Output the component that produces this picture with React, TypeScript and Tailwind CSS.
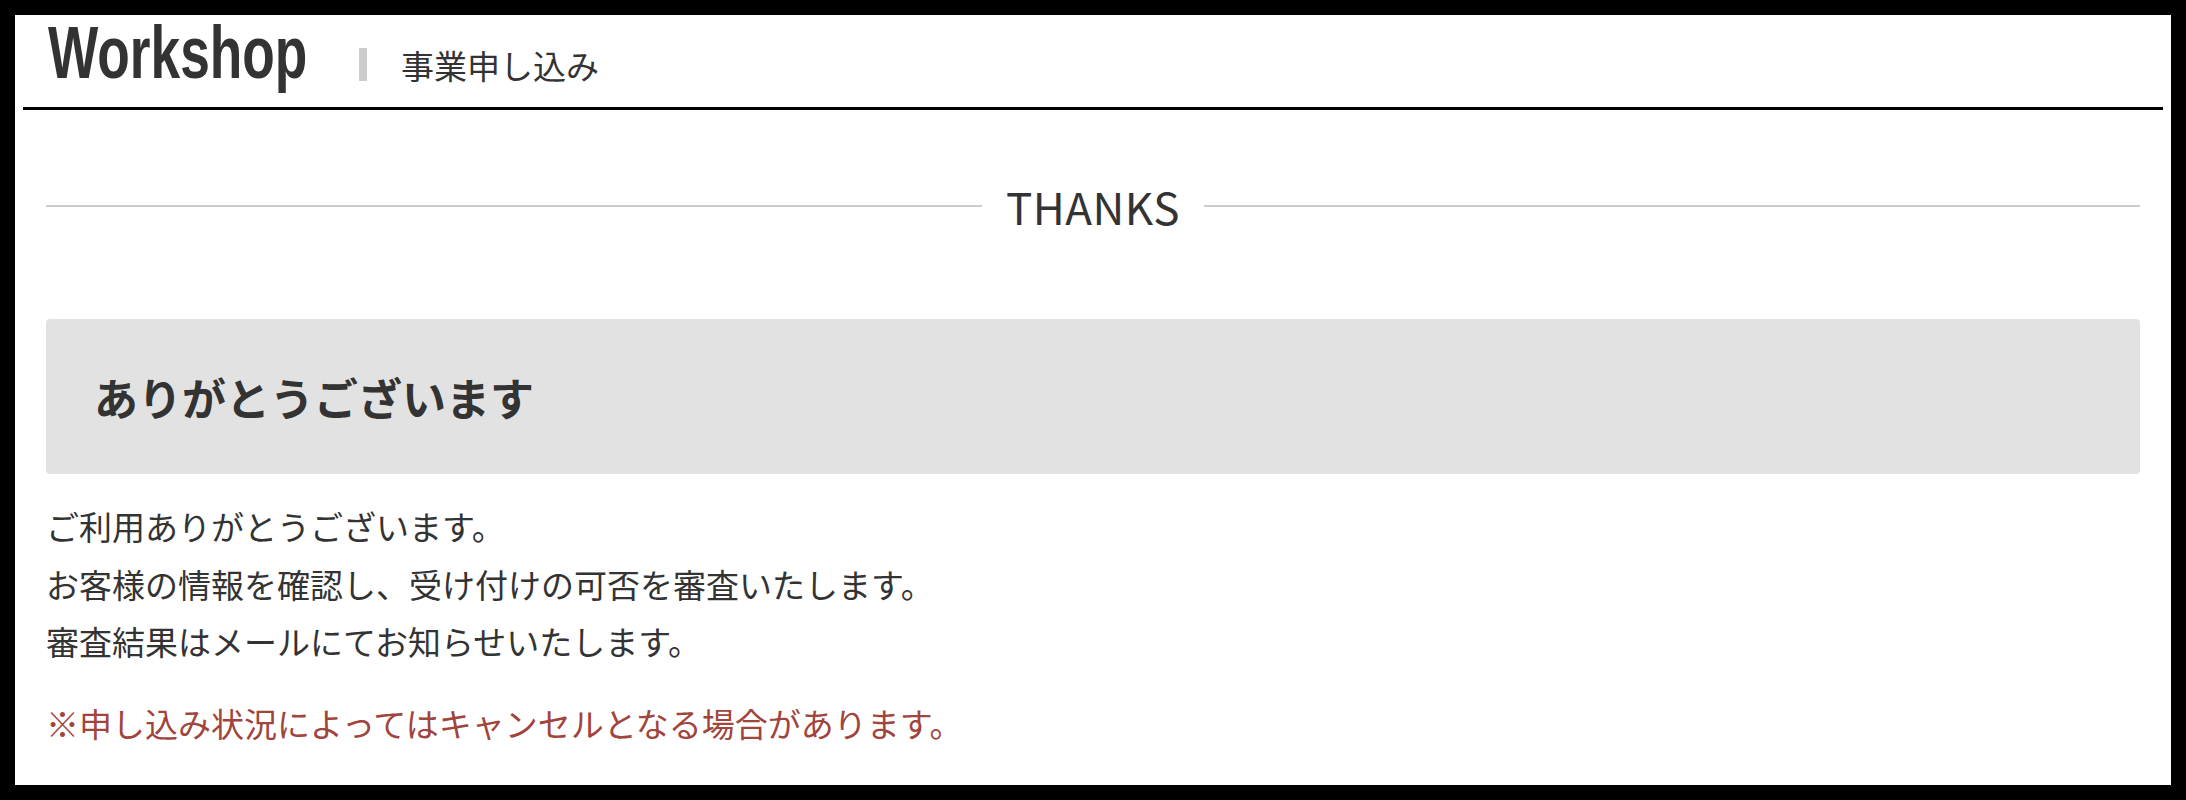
import React from "react";

const jp = { fontFamily: '"Noto Sans CJK JP", "Noto Sans", sans-serif' };

export default function App() {
  return (
    <div className="w-full h-[800px] bg-black p-[15px] overflow-hidden">
      <div className="bg-white h-[770px] text-[#333]" style={jp}>
        {/* Header */}
        <header className="mx-[8px] border-b-[3px] border-black h-[95px] flex items-start pl-[25px]">
          <div className="w-[260px] h-[78px]">
            <div
              className="w-max origin-left scale-x-[0.71] text-[75px] leading-[74px] font-bold text-[#333] whitespace-nowrap"
              style={{ fontFamily: '"Liberation Sans", Arial, sans-serif' }}
            >
              Workshop
            </div>
          </div>
          <div className="ml-[51px] mt-[33px] w-[8px] h-[33px] bg-[#cccccc]" />
          <div className="ml-[34px] mt-[34px] text-[33px] leading-[33px] whitespace-nowrap">事業申し込み</div>
        </header>

        {/* Section title */}
        <div className="px-[31px] mt-[74px] flex items-center gap-[24px]">
          <div className="flex-1 h-[2px] bg-[#cccccc]" />
          <div className="text-[44px] leading-[44px] tracking-[0.5px]">THANKS</div>
          <div className="flex-1 h-[2px] bg-[#cccccc]" />
        </div>

        {/* Box */}
        <div className="mx-[31px] mt-[91px] h-[155px] rounded-[4px] bg-[#e2e2e2] flex items-center pl-[48px]">
          <h2 className="text-[44px] leading-[1.5] font-bold text-[#333]">ありがとうございます</h2>
        </div>

        {/* Body */}
        <div className="px-[31px] mt-[24px] text-[33px] leading-[57.5px]">
          <p>ご利用ありがとうございます。</p>
          <p>お客様の情報を確認し、受け付けの可否を審査いたします。</p>
          <p>審査結果はメールにてお知らせいたします。</p>
          <p className="mt-[24px] text-[#a0443c]">※申し込み状況によってはキャンセルとなる場合があります。</p>
        </div>
      </div>
    </div>
  );
}
